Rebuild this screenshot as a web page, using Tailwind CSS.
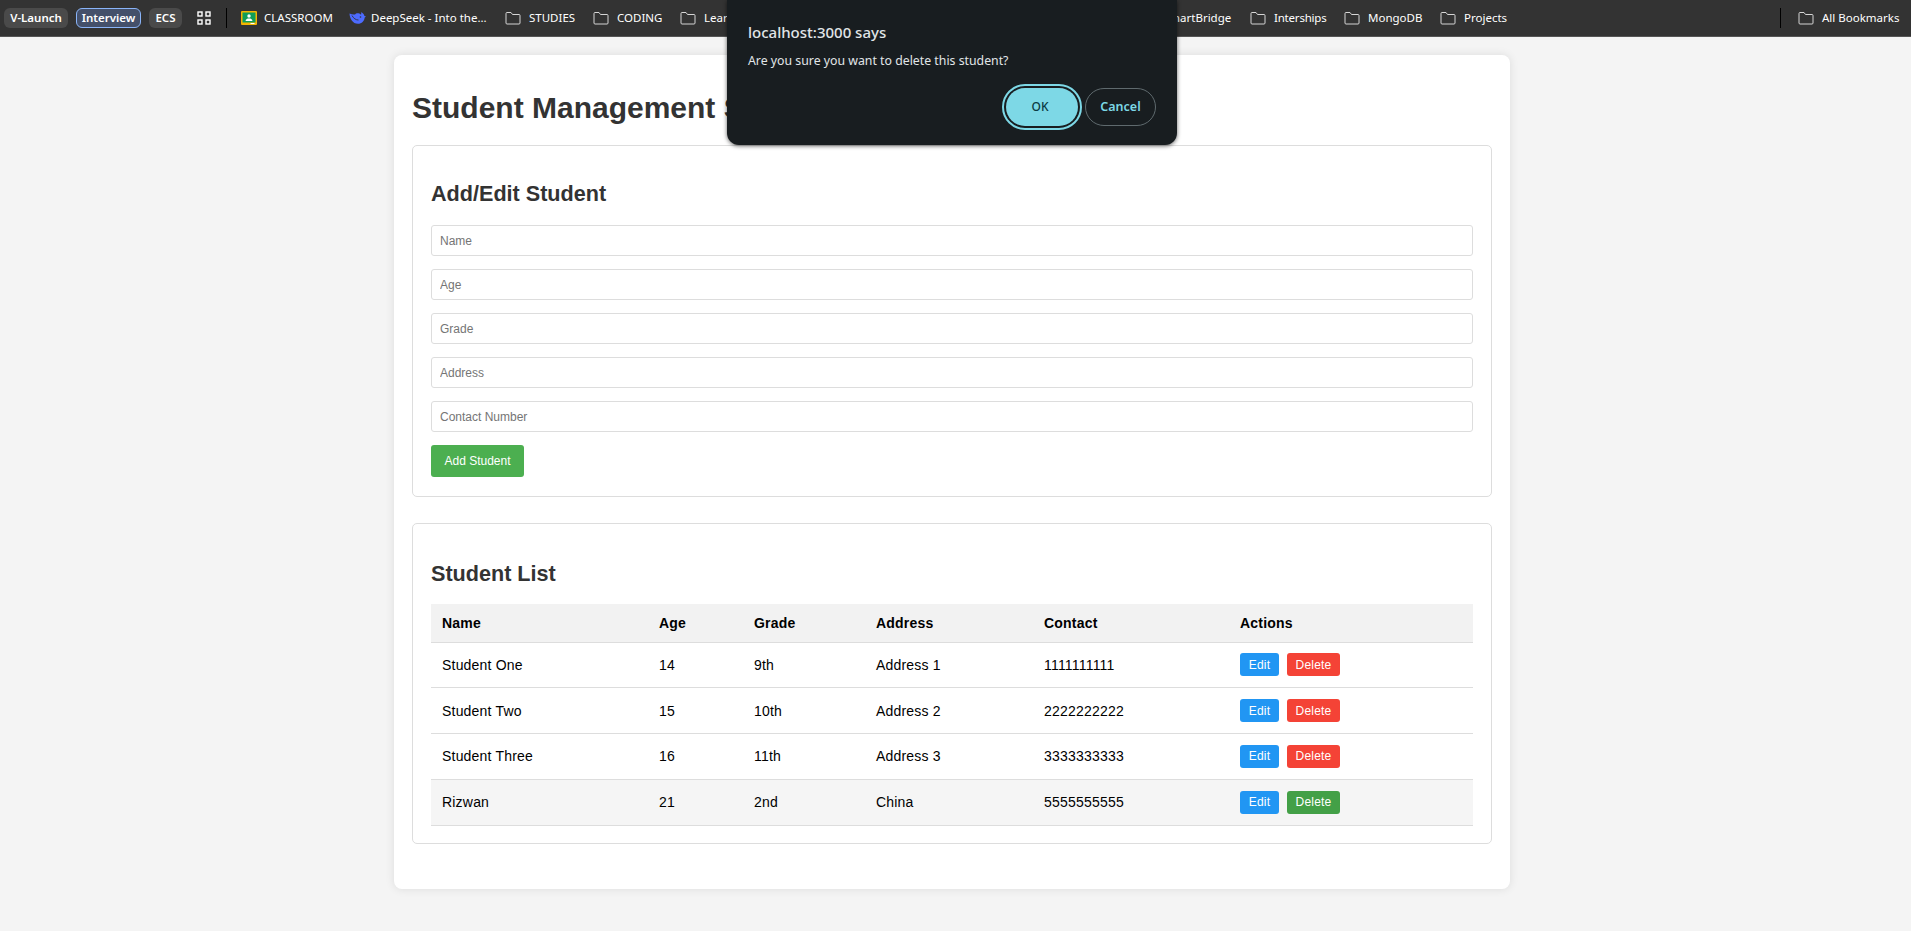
<!DOCTYPE html>
<html lang="en">
  <head>
    <meta charset="UTF-8" />
    <meta name="viewport" content="width=device-width, initial-scale=1.0" />
    <title>Student Management System</title>
    <script src="https://cdn.jsdelivr.net/npm/@tailwindcss/browser@4"></script>
  </head>
  <body class="relative h-[931px] overflow-hidden bg-[#f4f4f4] font-['Liberation_Sans',sans-serif] text-black">
    <!-- Bookmarks bar -->
    <div class="flex h-[37px] items-center border-b border-[#555] bg-[#333] pl-1 font-['Noto_Sans',sans-serif] text-[11.5px] text-white">
      <span class="flex h-5 w-16 items-center justify-center rounded-md bg-[#4a4a4a] font-semibold">V-Launch</span>
      <span class="ml-2 flex h-5 w-[65px] items-center justify-center rounded-md border border-[#8ab4f8] bg-[#44506a] font-semibold">Interview</span>
      <span class="ml-2 flex h-5 w-[33px] items-center justify-center rounded-md bg-[#4a4a4a] font-semibold">ECS</span>
      <svg class="ml-[15px] h-[14px] w-[14px]" viewBox="0 0 14 14" fill="none" stroke="#fff" stroke-width="1.4"><rect x="1" y="1" width="4" height="4" /><rect x="9" y="1" width="4" height="4" /><rect x="1" y="9" width="4" height="4" /><rect x="9" y="9" width="4" height="4" /></svg>
      <span class="ml-[15px] h-5 w-px bg-black"></span>
      <svg class="ml-[14px] h-[14px] w-4" viewBox="0 0 16 14"><rect width="16" height="14" rx="1" fill="#f4b400" /><rect x="1.500" y="1.500" width="13" height="10" fill="#0f9d58" /><circle cx="8" cy="5" r="1.700" fill="#fff" /><path d="M4.500 10c.3-2 1.800-2.500 3.500-2.500s3.200.5 3.500 2.500z" fill="#fff" /><rect x="9.500" y="12" width="4" height="1" fill="#fff" /></svg>
      <span class="ml-[7px] w-[85px]">CLASSROOM</span>
      <svg class="h-3 w-[17px]" viewBox="0 0 17 12"><path d="M.500 1.500C.800 6.500 3.500 11.800 9 11.800c3.800 0 6.300-2.800 6.700-6.300.5-.3.900-.8 1.100-1.500-.5.200-1 .2-1.400 0C15.200 2.200 13.800.700 11.800.200c.6.900.6 1.800.2 2.500C10 .900 7.200 1 6 2.500 4.500 2.800 2.500 2.500.500 1.500z" fill="#4d6bfe" /><path d="M3 3.500c1.500 3 4 4.500 6.500 4.500" fill="none" stroke="#333" stroke-width=".9" /><circle cx="11.500" cy="5" r=".8" fill="#333" /></svg>
      <span class="ml-[5px] w-[134px]">DeepSeek - Into the...</span>
      <svg class="h-[14px] w-4" viewBox="0 0 16 14" fill="none" stroke="#d5d5d5"><path d="M1 2.500a1 1 0 0 1 1-1h4l1.500 2H14a1 1 0 0 1 1 1V12a1 1 0 0 1-1 1H2a1 1 0 0 1-1-1z" /></svg>
      <span class="ml-2 w-[64px]">STUDIES</span>
      <svg class="h-[14px] w-4" viewBox="0 0 16 14" fill="none" stroke="#d5d5d5"><path d="M1 2.500a1 1 0 0 1 1-1h4l1.500 2H14a1 1 0 0 1 1 1V12a1 1 0 0 1-1 1H2a1 1 0 0 1-1-1z" /></svg>
      <span class="ml-2 w-[63px]">CODING</span>
      <svg class="h-[14px] w-4" viewBox="0 0 16 14" fill="none" stroke="#d5d5d5"><path d="M1 2.500a1 1 0 0 1 1-1h4l1.500 2H14a1 1 0 0 1 1 1V12a1 1 0 0 1-1 1H2a1 1 0 0 1-1-1z" /></svg>
      <span class="ml-2 w-[60px]">Learning</span>
      <span class="ml-[399px] w-[87px]">SmartBridge</span>
      <svg class="h-[14px] w-4" viewBox="0 0 16 14" fill="none" stroke="#d5d5d5"><path d="M1 2.500a1 1 0 0 1 1-1h4l1.500 2H14a1 1 0 0 1 1 1V12a1 1 0 0 1-1 1H2a1 1 0 0 1-1-1z" /></svg>
      <span class="ml-2 w-[70px] tracking-[-0.2px]">Interships</span>
      <svg class="h-[14px] w-4" viewBox="0 0 16 14" fill="none" stroke="#d5d5d5"><path d="M1 2.500a1 1 0 0 1 1-1h4l1.500 2H14a1 1 0 0 1 1 1V12a1 1 0 0 1-1 1H2a1 1 0 0 1-1-1z" /></svg>
      <span class="ml-2 w-[72px]">MongoDB</span>
      <svg class="h-[14px] w-4" viewBox="0 0 16 14" fill="none" stroke="#d5d5d5"><path d="M1 2.500a1 1 0 0 1 1-1h4l1.500 2H14a1 1 0 0 1 1 1V12a1 1 0 0 1-1 1H2a1 1 0 0 1-1-1z" /></svg>
      <span class="ml-2 w-[316px]">Projects</span>
      <span class="h-5 w-px bg-black"></span>
      <svg class="ml-[17px] h-[14px] w-4" viewBox="0 0 16 14" fill="none" stroke="#d5d5d5"><path d="M1 2.500a1 1 0 0 1 1-1h4l1.500 2H14a1 1 0 0 1 1 1V12a1 1 0 0 1-1 1H2a1 1 0 0 1-1-1z" /></svg>
      <span class="ml-2">All Bookmarks</span>
    </div>

    <!-- Main card -->
    <div class="mt-[18px] ml-[394px] h-[834px] w-[1116px] rounded-lg bg-white px-[18px] pt-[35px] shadow-[0_0_10px_rgba(0,0,0,0.1)]">
      <h1 class="h-[55px] text-[30px] leading-[36px] font-bold text-[#333]">Student Management System</h1>

      <!-- Add/Edit form -->
      <div class="h-[352px] rounded-[5px] border border-[#ddd] px-[18px] pt-[33px]">
        <h2 class="mb-[17px] text-[21.6px] leading-[29px] font-bold text-[#333]">Add/Edit Student</h2>
        <form class="flex flex-col gap-[13px]">
          <input class="h-[31px] w-full rounded-[3px] border border-[#ddd] px-2 text-xs placeholder:text-[#757575]" placeholder="Name" />
          <input class="h-[31px] w-full rounded-[3px] border border-[#ddd] px-2 text-xs placeholder:text-[#757575]" placeholder="Age" />
          <input class="h-[31px] w-full rounded-[3px] border border-[#ddd] px-2 text-xs placeholder:text-[#757575]" placeholder="Grade" />
          <input class="h-[31px] w-full rounded-[3px] border border-[#ddd] px-2 text-xs placeholder:text-[#757575]" placeholder="Address" />
          <input class="h-[31px] w-full rounded-[3px] border border-[#ddd] px-2 text-xs placeholder:text-[#757575]" placeholder="Contact Number" />
          <button type="button" class="h-8 w-[93px] rounded-[3px] bg-[#4caf50] text-xs font-medium text-white">Add Student</button>
        </form>
      </div>

      <!-- Student list -->
      <div class="mt-[26px] h-[321px] rounded-[5px] border border-[#ddd] px-[18px] pt-[35px]">
        <h2 class="mb-[16px] text-[21.6px] leading-[29px] font-bold text-[#333]">Student List</h2>
        <table class="w-[1042px] table-fixed border-collapse text-left text-sm tracking-[0.2px]">
          <colgroup>
            <col class="w-[217px]" />
            <col class="w-[95px]" />
            <col class="w-[122px]" />
            <col class="w-[168px]" />
            <col class="w-[196px]" />
            <col class="w-[244px]" />
          </colgroup>
          <thead>
            <tr class="h-[38px] border-b border-[#ddd] bg-[#f2f2f2]">
              <th class="px-[11px]">Name</th>
              <th class="px-[11px]">Age</th>
              <th class="px-[11px]">Grade</th>
              <th class="px-[11px]">Address</th>
              <th class="px-[11px]">Contact</th>
              <th class="px-[11px]">Actions</th>
            </tr>
          </thead>
          <tbody>
            <tr class="h-[45.750px] border-b border-[#ddd]">
              <td class="px-[11px]">Student One</td><td class="px-[11px]">14</td><td class="px-[11px]">9th</td><td class="px-[11px]">Address 1</td><td class="px-[11px]">1111111111</td>
              <td class="px-[11px]"><div class="flex gap-2"><button class="h-[23px] w-[39px] rounded-[3px] bg-[#2196f3] text-xs text-white">Edit</button><button class="h-[23px] w-[53px] rounded-[3px] bg-[#f44336] text-xs text-white">Delete</button></div></td>
            </tr>
            <tr class="h-[45.750px] border-b border-[#ddd]">
              <td class="px-[11px]">Student Two</td><td class="px-[11px]">15</td><td class="px-[11px]">10th</td><td class="px-[11px]">Address 2</td><td class="px-[11px]">2222222222</td>
              <td class="px-[11px]"><div class="flex gap-2"><button class="h-[23px] w-[39px] rounded-[3px] bg-[#2196f3] text-xs text-white">Edit</button><button class="h-[23px] w-[53px] rounded-[3px] bg-[#f44336] text-xs text-white">Delete</button></div></td>
            </tr>
            <tr class="h-[45.750px] border-b border-[#ddd]">
              <td class="px-[11px]">Student Three</td><td class="px-[11px]">16</td><td class="px-[11px]">11th</td><td class="px-[11px]">Address 3</td><td class="px-[11px]">3333333333</td>
              <td class="px-[11px]"><div class="flex gap-2"><button class="h-[23px] w-[39px] rounded-[3px] bg-[#2196f3] text-xs text-white">Edit</button><button class="h-[23px] w-[53px] rounded-[3px] bg-[#f44336] text-xs text-white">Delete</button></div></td>
            </tr>
            <tr class="h-[45.750px] border-b border-[#ddd] bg-[#f5f5f5]">
              <td class="px-[11px]">Rizwan</td><td class="px-[11px]">21</td><td class="px-[11px]">2nd</td><td class="px-[11px]">China</td><td class="px-[11px]">5555555555</td>
              <td class="px-[11px]"><div class="flex gap-2"><button class="h-[23px] w-[39px] rounded-[3px] bg-[#2196f3] text-xs text-white">Edit</button><button class="h-[23px] w-[53px] rounded-[3px] bg-[#43a047] text-xs text-white">Delete</button></div></td>
            </tr>
          </tbody>
        </table>
      </div>
    </div>

    <!-- Browser confirm dialog -->
    <div class="absolute top-0 left-[727px] h-[145px] w-[450px] rounded-b-xl bg-[#181d20] px-[21px] font-['Noto_Sans',sans-serif] shadow-[0_1px_4px_rgba(0,0,0,0.6)]">
      <p class="pt-[21px] text-[15px] leading-[22px] font-medium text-[#e1e5e8]">localhost:3000 says</p>
      <p class="mt-[9px] text-[12.3px] leading-[18px] text-[#e1e5e8]">Are you sure you want to delete this student?</p>
      <div class="mt-[18px] flex items-center justify-end gap-[7px]">
        <button class="h-[38px] w-[72px] rounded-full bg-[#7dd8e6] pr-1 text-xs font-medium text-[#0b3a42] outline-2 outline-offset-[2px] outline-[#7dd8e6]">OK</button>
        <button class="h-[38px] w-[71px] rounded-full border border-[#5f6a6e] text-[12.5px] font-semibold text-[#7dd8e6]">Cancel</button>
      </div>
    </div>
  </body>
</html>
